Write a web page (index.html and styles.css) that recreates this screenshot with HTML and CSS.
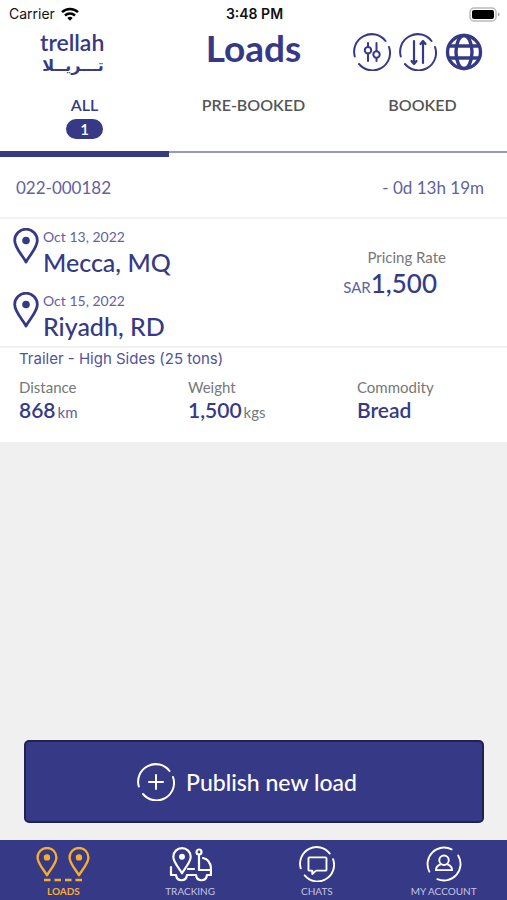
FILE: index.html
```html
<!DOCTYPE html>
<html lang="en">
<head>
<meta charset="utf-8">
<meta name="viewport" content="width=device-width, initial-scale=1">
<title>Loads</title>
<link rel="stylesheet" href="styles.css">
</head>
<body>
<svg class="defs" aria-hidden="true">
  <symbol id="pin" viewBox="0 0 26 36"><path d="M13 34C10 28 1.700 20 1.700 12.500a11.300 11.300 0 0 1 22.600 0C24.300 20 16 28 13 34Z" fill="none" stroke="currentColor" stroke-width="2.800" stroke-linejoin="round"/><circle cx="13" cy="12.500" r="3.800" fill="currentColor"/></symbol>
  <symbol id="ring" viewBox="0 0 38 38"><path d="M1.800 23.500A17.500 17.500 0 0 1 32.500 8M36 14A17.500 17.500 0 0 1 6 31" fill="none" stroke="currentColor" stroke-width="2" stroke-linecap="round"/></symbol>
</svg>
<div class="status">
  <span class="carrier">Carrier
    <svg width="18" height="14" viewBox="0 0 18 14"><g fill="none" stroke="#000" stroke-width="2.500"><path d="M1 5.200a11.500 11.500 0 0 1 16 0M4 8.500a7.200 7.200 0 0 1 10 0"/></g><path d="M6.300 11a3.900 3.900 0 0 1 5.400 0L9 13.800Z"/></svg>
  </span>
  <span class="time">3:48 PM</span>
  <svg class="battery" width="31" height="15" viewBox="0 0 31 15"><rect x="1" y="1" width="26" height="13" rx="4" fill="none" stroke="#bbb" stroke-width="1.500"/><rect x="3" y="3" width="22" height="9" rx="2"/><path d="M29 5.500q3 2 0 4Z" fill="#999"/></svg>
</div>
<header class="header">
  <div class="logo"><span class="latin">trellah</span><span class="arabic" lang="ar" dir="rtl">تـــريــلا</span></div>
  <h1>Loads</h1>
  <div class="actions">
    <button aria-label="Filter"><svg width="38" height="38" viewBox="0 0 38 38"><use href="#ring"/><g fill="none" stroke="currentColor" stroke-width="2" stroke-linecap="round"><path d="M15 10v4M15 20.500V28M23.500 10v8M23.500 25v3"/><circle cx="15" cy="17.200" r="3.200"/><circle cx="23.500" cy="21.500" r="3.200"/></g></svg></button>
    <button aria-label="Sort"><svg width="38" height="38" viewBox="0 0 38 38"><use href="#ring"/><path d="M15 8v22M24 30V9M12.500 28l2.500 3 2.500-3M21.500 11 24 8l2.500 3" fill="none" stroke="currentColor" stroke-width="2.200" stroke-linecap="round" stroke-linejoin="round"/></svg></button>
    <button aria-label="Language"><svg width="38" height="38" viewBox="0 0 38 38"><g fill="none" stroke="currentColor" stroke-width="3.400"><circle cx="19" cy="19" r="16.500"/><ellipse cx="19" cy="19" rx="8" ry="16.500"/><path d="M3.500 13h31M3.500 25h31"/></g></svg></button>
  </div>
</header>
<nav class="tabs">
  <button class="tab active">ALL<span class="count">1</span></button>
  <button class="tab">PRE-BOOKED</button>
  <button class="tab">BOOKED</button>
</nav>
<main>
  <article class="load">
    <div class="row ref"><span>022-000182</span><span>- 0d 13h 19m</span></div>
    <div class="row route">
      <div class="stops">
        <div class="stop"><svg width="26" height="36"><use href="#pin"/></svg><div><div class="date">Oct 13, 2022</div><div class="city">Mecca, MQ</div></div></div>
        <div class="stop"><svg width="26" height="36"><use href="#pin"/></svg><div><div class="date">Oct 15, 2022</div><div class="city">Riyadh, RD</div></div></div>
      </div>
      <div class="price"><div class="label">Pricing Rate</div><div class="amount"><small>SAR</small>1,500</div></div>
    </div>
    <div class="cargo">
      <div class="trailer">Trailer - High Sides (25 tons)</div>
      <div class="facts">
        <div><div class="label">Distance</div><div class="value">868<small>km</small></div></div>
        <div><div class="label">Weight</div><div class="value">1,500<small class="muted">kgs</small></div></div>
        <div><div class="label">Commodity</div><div class="value">Bread</div></div>
      </div>
    </div>
  </article>
  <button class="publish"><svg width="38" height="38" viewBox="0 0 38 38"><use href="#ring"/><path d="M19 12v14M12 19h14" stroke="currentColor" stroke-width="2" stroke-linecap="round"/></svg>Publish new load</button>
</main>
<nav class="bottom">
  <a href="#loads" class="current"><svg width="56" height="38" viewBox="0 0 56 38"><use href="#pin" x="1" y="2" width="22" height="30"/><use href="#pin" x="33" y="2" width="22" height="30"/><path d="M9 35h38" stroke="currentColor" stroke-width="2.500" stroke-dasharray="6.500 4"/></svg>LOADS</a>
  <a href="#tracking"><svg width="44" height="38" viewBox="0 0 44 38"><use href="#pin" x="4" y="2" width="20" height="28"/><g fill="none" stroke="currentColor" stroke-width="2.200" stroke-linejoin="round" stroke-linecap="round"><path d="M3 22v8h5c1 7 10 7 11 0h9c1 7 10 7 11 0h4v-5M20 24h6M31 10v15h12c0-7-3-11-8-12"/><circle cx="31" cy="7" r="2.500"/></g></svg>TRACKING</a>
  <a href="#chats"><svg width="36" height="38" viewBox="0 0 38 38"><use href="#ring"/><path d="M11 12h17q1 0 1 1v12q0 1-1 1H18l-4 3.500V26h-3q-1 0-1-1V13q0-1 1-1Z" fill="none" stroke="currentColor" stroke-width="2" stroke-linejoin="round"/></svg>CHATS</a>
  <a href="#account"><svg width="36" height="38" viewBox="0 0 38 38"><path d="M3.500 27A17.500 17.500 0 0 1 27 3.500M34 10A17.500 17.500 0 0 1 12 35" fill="none" stroke="currentColor" stroke-width="2" stroke-linecap="round"/><g fill="none" stroke="currentColor" stroke-width="2" stroke-linejoin="round"><circle cx="19" cy="15" r="5"/><path d="M15.500 19.500c-3 1-5 3-5 6h17c0-3-2-5-5-6"/></g></svg>MY ACCOUNT</a>
</nav>
</body>
</html>
```
FILE: styles.css
```css
:root { --navy: #363a86; --soft: #5f62a0; --gray: #777; }
* { box-sizing: border-box; }
body {
  margin: 0;
  min-height: 100vh;
  display: flex;
  flex-direction: column;
  background: #f0f0f0;
  color: var(--navy);
  font-family: Lato, "Liberation Sans", sans-serif;
}
button {
  margin: 0;
  padding: 0;
  border: 0;
  background: none;
  color: inherit;
  font: inherit;
}
svg { display: block; flex: none; }
.defs { position: absolute; width: 0; height: 0; }

.status {
  display: grid;
  grid-template-columns: 1fr auto 1fr;
  align-items: center;
  height: 28px;
  padding: 0 7px 0 9px;
  background: #fff;
  color: #111;
  font: 14px/28px Inter, sans-serif;
}
.carrier { display: flex; align-items: center; gap: 6px; }
.time { font-weight: 600; }
.battery { justify-self: end; }

.header {
  display: grid;
  grid-template-columns: 1fr auto 1fr;
  height: 57px;
  padding: 0 24px;
  background: #fff;
}
.logo { display: flex; flex-direction: column; width: 66px; margin-left: 16px; padding-top: 1px; }
.latin { font-size: 23px; line-height: 26px; font-weight: 600; }
.arabic { font: bold 16px/22px "DejaVu Sans", sans-serif; text-align: center; }
h1 { margin: 0; font-size: 37px; line-height: 40px; font-weight: 700; }
.actions { display: flex; justify-content: flex-end; gap: 8px; padding-top: 5px; }
.actions button { height: 38px; }

.tabs {
  display: grid;
  grid-template-columns: repeat(3, 1fr);
  height: 72px;
  background: #fff;
}
.tab {
  display: flex;
  flex-direction: column;
  align-items: center;
  gap: 4px;
  height: 68px;
  padding-top: 10px;
  border-bottom: 2px solid #9897c0;
  color: #555;
  font-size: 16px;
  line-height: 20px;
  font-weight: 600;
}
.tab.active { height: 72px; border-bottom: 6px solid var(--navy); color: var(--navy); }
.count {
  width: 37px;
  border-radius: 10px;
  background: var(--navy);
  color: #fff;
  font-size: 15px;
}

main { flex: 1; display: flex; flex-direction: column; }
.load { background: #fff; }
.row {
  display: flex;
  justify-content: space-between;
  border-bottom: 2px solid #f3f3f3;
}
.ref {
  padding: 18px 23px 17px 16px;
  color: var(--soft);
  font-size: 17px;
  line-height: 25px;
}
.route { padding: 9px 61px 0 13px; }
.stops { display: grid; gap: 10px; }
.stop { display: flex; gap: 4px; }
.date { color: var(--soft); font-size: 14px; line-height: 18px; }
.city { font-size: 25px; line-height: 32px; height: 36px; font-weight: 500; }
.price { padding-top: 19px; }
.label { color: var(--gray); font-size: 15px; line-height: 20px; }
.price .label { text-align: right; }
.amount { margin-right: 9px; font-size: 26px; line-height: 32px; font-weight: 500; }
small { font-size: 15px; font-weight: 400; color: var(--soft); }
.cargo { padding-bottom: 17px; }
.trailer { padding-left: 19px; color: #5053a0; font: 15px/22px Inter, sans-serif; }
.facts { display: grid; grid-template-columns: repeat(3, 1fr); padding-top: 7px; }
.facts > div { padding-left: 19px; }
.value { font-size: 21px; line-height: 26px; font-weight: 600; }
.value small { margin-left: 2px; }
.value .muted { color: var(--gray); }

.publish {
  display: flex;
  align-items: center;
  justify-content: center;
  gap: 11px;
  height: 83px;
  margin: auto 23px 17px 24px;
  padding-right: 14px;
  border: 2px solid #20234d;
  border-radius: 5px;
  background: var(--navy);
  color: #fff;
  font-size: 23px;
  font-weight: 500;
}
.bottom {
  display: grid;
  grid-template-columns: repeat(4, 1fr);
  height: 60px;
  padding-top: 5px;
  background: var(--navy);
}
.bottom a {
  display: flex;
  flex-direction: column;
  align-items: center;
  color: #c4c5e2;
  font-size: 10px;
  line-height: 16px;
  text-decoration: none;
}
.bottom svg { color: #fff; }
.bottom .current { color: #f7ae2d; font-weight: 700; }
.bottom .current svg { color: inherit; }
```
